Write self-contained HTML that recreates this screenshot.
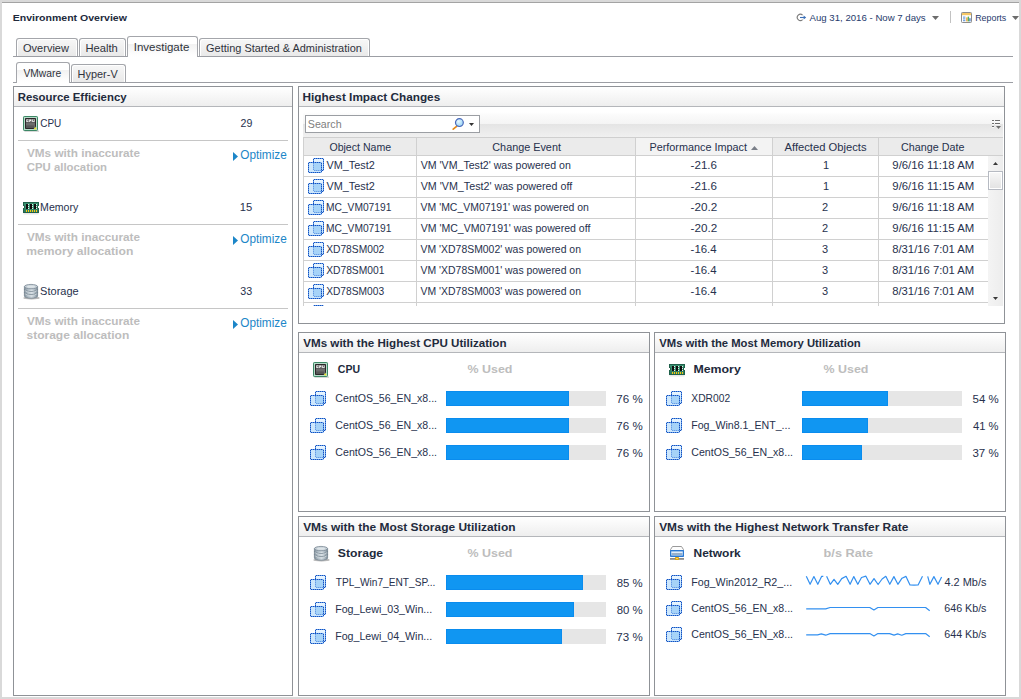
<!DOCTYPE html>
<html><head><meta charset="utf-8"><title>Environment Overview</title>
<style>
html,body{margin:0;padding:0;overflow:hidden}
body{width:1021px;height:699px;overflow:hidden;background:#d9d9d9;position:relative;font-family:"Liberation Sans",sans-serif;font-size:11px;color:#27314d}
.t{position:absolute;white-space:pre;line-height:16px;transform-origin:0 0}
div,svg{box-sizing:border-box}
</style></head><body>
<div style="position:absolute;left:2px;top:2px;width:1017px;height:695px;background:#fff;border-top:1px solid #a3a3a3"></div>
<div style="position:absolute;left:950px;top:11px;width:1px;height:12px;background:#c2c2c2"></div>
<svg style="position:absolute;left:796px;top:13px" width="12" height="9" viewBox="0 0 12 9"><path d="M6.6 2.2 A3.1 3.1 0 1 0 6.6 6.6" fill="none" stroke="#7c7c7c" stroke-width="1.1"/><path d="M4 4.5 H9" stroke="#3c70b8" stroke-width="1.1"/><path d="M7.6 2.6 L10.2 4.5 L7.6 6.4 Z" fill="#3c70b8"/></svg>
<svg style="position:absolute;left:932px;top:16px" width="7" height="4" viewBox="0 0 7 4"><path d="M0 0 H7 L3.5 4 Z" fill="#6c6c6c"/></svg>
<svg style="position:absolute;left:1012px;top:16px" width="7" height="4" viewBox="0 0 7 4"><path d="M0 0 H7 L3.5 4 Z" fill="#6c6c6c"/></svg>
<svg style="position:absolute;left:961px;top:12px" width="11" height="11" viewBox="0 0 11 11"><rect x="0.5" y="0.5" width="10" height="10" rx="0.8" fill="#fff" stroke="#8c8c8c"/><rect x="1" y="1" width="9" height="2.2" fill="#f6c766"/><rect x="2" y="4.6" width="2.4" height="1" fill="#5a8fd8"/><rect x="2" y="6.4" width="2.4" height="1" fill="#5a8fd8"/><rect x="2" y="8.2" width="2.4" height="1" fill="#5a8fd8"/><rect x="5.2" y="5.4" width="1.4" height="4" fill="#f0a030"/><rect x="6.7" y="4.6" width="1.4" height="4.8" fill="#58b058"/><rect x="8.2" y="6.2" width="1.4" height="3.2" fill="#4a80d0"/></svg>
<div style="position:absolute;left:13px;top:56px;width:1000px;height:1px;background:#9c9ea4"></div>
<div style="position:absolute;left:13px;top:82px;width:1000px;height:1px;background:#9c9ea4"></div>
<div style="position:absolute;left:16px;top:38px;width:62px;height:18px;border:1px solid #a4a6ab;border-bottom:none;border-radius:3px 3px 0 0;background:linear-gradient(#f7f7f7,#e9e9e9);box-shadow:inset 1px 1px 0 #fff,inset -1px 0 0 #fff"></div>
<div style="position:absolute;left:79px;top:38px;width:47px;height:18px;border:1px solid #a4a6ab;border-bottom:none;border-radius:3px 3px 0 0;background:linear-gradient(#f7f7f7,#e9e9e9);box-shadow:inset 1px 1px 0 #fff,inset -1px 0 0 #fff"></div>
<div style="position:absolute;left:127px;top:36px;width:71px;height:21px;border:1px solid #a4a6ab;border-bottom:none;border-radius:3px 3px 0 0;background:linear-gradient(#fff 0%,#fff 36%,#f2f2f2 37%,#fdfdfd 85%,#fff 100%)"></div>
<div style="position:absolute;left:199px;top:38px;width:171px;height:18px;border:1px solid #a4a6ab;border-bottom:none;border-radius:3px 3px 0 0;background:linear-gradient(#f7f7f7,#e9e9e9);box-shadow:inset 1px 1px 0 #fff,inset -1px 0 0 #fff"></div>
<div style="position:absolute;left:16px;top:62px;width:54px;height:21px;border:1px solid #a4a6ab;border-bottom:none;border-radius:3px 3px 0 0;background:linear-gradient(#fff 0%,#fff 36%,#f2f2f2 37%,#fdfdfd 85%,#fff 100%)"></div>
<div style="position:absolute;left:71px;top:64px;width:55px;height:18px;border:1px solid #a4a6ab;border-bottom:none;border-radius:3px 3px 0 0;background:linear-gradient(#f7f7f7,#e9e9e9);box-shadow:inset 1px 1px 0 #fff,inset -1px 0 0 #fff"></div>
<div style="position:absolute;left:13px;top:86px;width:280px;height:610px;border:1px solid #8f9297;background:#fff"></div>
<div style="position:absolute;left:14px;top:87px;width:278px;height:19px;background:linear-gradient(#fff,#eee)"></div>
<div style="position:absolute;left:14px;top:106px;width:278px;height:1px;background:#b4b6ba"></div>
<div style="position:absolute;left:298px;top:86px;width:707px;height:238px;border:1px solid #8f9297;background:#fff"></div>
<div style="position:absolute;left:299px;top:87px;width:705px;height:19px;background:linear-gradient(#fff,#eee)"></div>
<div style="position:absolute;left:299px;top:106px;width:705px;height:1px;background:#b4b6ba"></div>
<div style="position:absolute;left:298px;top:332px;width:352px;height:180px;border:1px solid #8f9297;background:#fff"></div>
<div style="position:absolute;left:299px;top:333px;width:350px;height:19px;background:linear-gradient(#fff,#eee)"></div>
<div style="position:absolute;left:299px;top:352px;width:350px;height:1px;background:#b4b6ba"></div>
<div style="position:absolute;left:654px;top:332px;width:352px;height:180px;border:1px solid #8f9297;background:#fff"></div>
<div style="position:absolute;left:655px;top:333px;width:350px;height:19px;background:linear-gradient(#fff,#eee)"></div>
<div style="position:absolute;left:655px;top:352px;width:350px;height:1px;background:#b4b6ba"></div>
<div style="position:absolute;left:298px;top:516px;width:352px;height:180px;border:1px solid #8f9297;background:#fff"></div>
<div style="position:absolute;left:299px;top:517px;width:350px;height:19px;background:linear-gradient(#fff,#eee)"></div>
<div style="position:absolute;left:299px;top:536px;width:350px;height:1px;background:#b4b6ba"></div>
<div style="position:absolute;left:654px;top:516px;width:352px;height:180px;border:1px solid #8f9297;background:#fff"></div>
<div style="position:absolute;left:655px;top:517px;width:350px;height:19px;background:linear-gradient(#fff,#eee)"></div>
<div style="position:absolute;left:655px;top:536px;width:350px;height:1px;background:#b4b6ba"></div>
<svg width="0" height="0" style="position:absolute"><defs><linearGradient id="vb" x1="0" y1="0" x2="0" y2="1"><stop offset="0" stop-color="#eaf6ff"/><stop offset="1" stop-color="#c0e0fa"/></linearGradient></defs></svg>
<div style="position:absolute;left:18px;top:140px;width:270px;height:1px;background:#c6c6c6"></div>
<svg style="position:absolute;left:233px;top:152px;overflow:visible" width="5" height="9" viewBox="0 0 5 9" ><path d="M0 0 L5 4.5 L0 9 Z" fill="#1c86c8"/></svg>
<div style="position:absolute;left:18px;top:224px;width:270px;height:1px;background:#c6c6c6"></div>
<svg style="position:absolute;left:233px;top:236px;overflow:visible" width="5" height="9" viewBox="0 0 5 9" ><path d="M0 0 L5 4.5 L0 9 Z" fill="#1c86c8"/></svg>
<div style="position:absolute;left:18px;top:308px;width:270px;height:1px;background:#c6c6c6"></div>
<svg style="position:absolute;left:233px;top:320px;overflow:visible" width="5" height="9" viewBox="0 0 5 9" ><path d="M0 0 L5 4.5 L0 9 Z" fill="#1c86c8"/></svg>
<svg style="position:absolute;left:23px;top:116px;overflow:visible" width="16" height="16" viewBox="0 0 16 16" ><rect x="1.5" y="14.6" width="14.5" height="1" fill="#8a8a8a" opacity="0.55"/><rect x="0.5" y="0.5" width="14" height="14" rx="0.8" fill="#86c0a6" stroke="#3c8765"/><rect x="1.5" y="1.5" width="12" height="12" fill="none" stroke="#b6dcc9"/><path d="M2.5 2.5 H12.5 V10.7 L10.7 12.5 H2.5 Z" fill="#5c5c5c" stroke="#2c2629"/><rect x="3" y="7" width="9" height="5" fill="#6c6c6c"/><rect x="3" y="9.4" width="8" height="2.6" fill="#565656"/><rect x="3.3" y="3.4" width="2.2" height="2.6" fill="#f0f0f0"/><rect x="4.3" y="4.2" width="1.2" height="1" fill="#4a4a4a"/><rect x="6.2" y="3.4" width="2.2" height="2.6" fill="#f0f0f0"/><rect x="7.2" y="5.1" width="1.2" height="0.9" fill="#4a4a4a"/><rect x="9.2" y="3.4" width="2.4" height="2.6" fill="#f0f0f0"/><rect x="10" y="3.4" width="0.8" height="1.8" fill="#4a4a4a"/><circle cx="12.3" cy="12.4" r="1" fill="#f2e31e"/></svg>
<svg style="position:absolute;left:23px;top:202px;overflow:visible" width="16" height="13" viewBox="0 0 16 13" ><rect x="0.5" y="11.2" width="15" height="1.2" fill="#bdbdbd" opacity="0.45"/><path d="M0 0 H16 V4 H15 V6 H16 V11 H0 V6 H1 V4 H0 Z" fill="#1f604a"/><path d="M1 1 H15 V3.4 H14 V6.6 H15 V10 H1 V6.6 H2 V3.4 H1 Z" fill="#3a9070"/><rect x="1" y="7" width="14" height="3" fill="#2d7c60"/><rect x="3" y="2" width="2" height="5" fill="#100c0e"/><rect x="7" y="2" width="2" height="5" fill="#100c0e"/><rect x="11" y="2" width="2" height="5" fill="#100c0e"/><rect x="5" y="2" width="1" height="1" fill="#e4f2ec"/><rect x="5" y="4" width="1" height="1" fill="#e4f2ec"/><rect x="5" y="6" width="1" height="1" fill="#e4f2ec"/><rect x="9" y="2" width="1" height="1" fill="#e4f2ec"/><rect x="9" y="4" width="1" height="1" fill="#e4f2ec"/><rect x="9" y="6" width="1" height="1" fill="#e4f2ec"/><rect x="13" y="2" width="1" height="1" fill="#e4f2ec"/><rect x="13" y="4" width="1" height="1" fill="#e4f2ec"/><rect x="13" y="6" width="1" height="1" fill="#e4f2ec"/><rect x="3" y="8" width="1" height="2" fill="#f7c80e"/><rect x="5" y="8" width="1" height="2" fill="#f7c80e"/><rect x="7" y="8" width="1" height="2" fill="#f7c80e"/><rect x="9" y="8" width="1" height="2" fill="#f7c80e"/><rect x="11" y="8" width="1" height="2" fill="#f7c80e"/><rect x="13" y="8" width="1" height="2" fill="#f7c80e"/></svg>
<svg style="position:absolute;left:24px;top:284px;overflow:visible" width="16" height="16" viewBox="0 0 16 16" ><defs><linearGradient id="sg24284" x1="0" x2="1"><stop offset="0" stop-color="#7d8c98"/><stop offset="0.22" stop-color="#aab7c0"/><stop offset="0.55" stop-color="#d6dee3"/><stop offset="0.8" stop-color="#a9b6bf"/><stop offset="1" stop-color="#788793"/></linearGradient></defs><ellipse cx="7.5" cy="13.9" rx="8.2" ry="1.7" fill="#7e7e7e" opacity="0.55"/><path d="M0.4 2.6 V12 A6.6 2.2 0 0 0 13.6 12 V2.6 Z" fill="url(#sg24284)" stroke="#74838f" stroke-width="0.8"/><ellipse cx="7" cy="2.6" rx="6.6" ry="2.2" fill="#c4ced5" stroke="#7b8995" stroke-width="0.8"/><ellipse cx="7" cy="2.7" rx="4" ry="1.1" fill="#dde4e8"/><path d="M0.4 5.4 A6.6 2.2 0 0 0 13.6 5.4 M0.4 8.5 A6.6 2.2 0 0 0 13.6 8.5" fill="none" stroke="#6c7c89" stroke-width="1"/><path d="M0.9 6.5 A6.3 2.2 0 0 0 13.1 6.5 M0.9 9.6 A6.3 2.2 0 0 0 13.1 9.6" fill="none" stroke="#e6ecef" stroke-width="0.8" opacity="0.85"/></svg>
<div style="position:absolute;left:303px;top:112px;width:700px;height:25px;background:linear-gradient(#fff 0%,#fbfbfb 12%,#f4f4f4 47.9%,#e4e4e4 48%,#f0f0f0 100%)"></div>
<div style="position:absolute;left:305px;top:115px;width:175px;height:18px;background:#fff;border:1px solid #9b9ea3"></div>
<svg style="position:absolute;left:452px;top:118px;overflow:visible" width="12" height="12" viewBox="0 0 12 12" ><defs><radialGradient id="mg" cx="0.4" cy="0.35"><stop offset="0" stop-color="#e9f8ff"/><stop offset="1" stop-color="#a9dcf8"/></radialGradient></defs><path d="M4.6 8.4 L1.2 11.2" stroke="#e58a18" stroke-width="1.7" stroke-linecap="round"/><circle cx="7.4" cy="4.6" r="3.9" fill="url(#mg)" stroke="#4968ba" stroke-width="1.2"/></svg>
<svg style="position:absolute;left:469px;top:123px;overflow:visible" width="5" height="3" viewBox="0 0 5 3" ><path d="M0 0 H5 L2.5 3 Z" fill="#333"/></svg>
<svg style="position:absolute;left:992px;top:120px;overflow:visible" width="9" height="9" viewBox="0 0 9 9" ><g fill="#fff" opacity="0.8"><rect x="0" y="1" width="2" height="1"/><rect x="3" y="1" width="5" height="1"/><rect x="0" y="4" width="2" height="1"/><rect x="3" y="4" width="5" height="1"/><rect x="0" y="7" width="2" height="1"/></g><g fill="#6e6e6e"><rect x="0" y="0" width="2" height="1"/><rect x="3" y="0" width="5" height="1"/><rect x="0" y="3" width="2" height="1"/><rect x="3" y="3" width="5" height="1"/><rect x="0" y="6" width="2" height="1"/><path d="M4 6 H9 L6.5 9 Z"/></g></svg>
<div style="position:absolute;left:303px;top:137px;width:700px;height:1px;background:#cfcfcf"></div>
<div style="position:absolute;left:303px;top:138px;width:700px;height:18px;background:#ebebeb"></div>
<div style="position:absolute;left:636px;top:138px;width:136px;height:18px;background:#f3f3f3"></div>
<div style="position:absolute;left:303px;top:155px;width:700px;height:1px;background:#d0d0d0"></div>
<div style="position:absolute;left:416px;top:138px;width:1px;height:168px;background:#d0d0d0"></div>
<div style="position:absolute;left:635px;top:138px;width:1px;height:168px;background:#d0d0d0"></div>
<div style="position:absolute;left:772px;top:138px;width:1px;height:168px;background:#d0d0d0"></div>
<div style="position:absolute;left:878px;top:138px;width:1px;height:168px;background:#d0d0d0"></div>
<div style="position:absolute;left:303px;top:138px;width:1px;height:168px;background:#d0d0d0"></div>
<svg style="position:absolute;left:751px;top:146px;overflow:visible" width="7" height="4" viewBox="0 0 7 4" ><path d="M0 4 L3.5 0 L7 4 Z" fill="#7a7f88"/></svg>
<div style="position:absolute;left:303px;top:176px;width:685px;height:1px;background:#d0d0d0"></div>
<svg style="position:absolute;left:308px;top:158px;overflow:visible" width="16" height="15" viewBox="0 0 16 15" ><rect x="6" y="1" width="9" height="11" fill="url(#vb)"/><path d="M6 .5H15M15.5 1V12M6 12.5H15M5.5 1V12" stroke="#5d99ea" fill="none"/><path d="M6 .5H15M15.5 1V12M6 12.5H15M5.5 1V12" stroke="#1752bd" stroke-dasharray="1 1" fill="none"/><path d="M5 0h1v1h-1zM15 0h1v1h-1zM15 12h1v1h-1z" fill="#5d99ea" opacity="0.45"/><rect x="1" y="5" width="12" height="9" fill="#cde7fc"/><rect x="6" y="5" width="7" height="7" fill="#a6d3f8"/><path d="M5.5 5V12M6 12.5H13" stroke="#8fbdf0" fill="none"/><path d="M5.5 5V12M6 12.5H13" stroke="#5a94e4" stroke-dasharray="1 1" fill="none" opacity="0.8"/><path d="M1 4.5H13M.5 5V14M13.5 5V14M1 14.5H13" stroke="#5d99ea" fill="none"/><path d="M1 4.5H13M.5 5V14M13.5 5V14M1 14.5H13" stroke="#1752bd" stroke-dasharray="1 1" fill="none"/><path d="M0 4h1v1h-1zM13 4h1v1h-1zM0 14h1v1h-1zM13 14h1v1h-1z" fill="#5d99ea" opacity="0.5"/></svg>
<div style="position:absolute;left:303px;top:197px;width:685px;height:1px;background:#d0d0d0"></div>
<svg style="position:absolute;left:308px;top:179px;overflow:visible" width="16" height="15" viewBox="0 0 16 15" ><rect x="6" y="1" width="9" height="11" fill="url(#vb)"/><path d="M6 .5H15M15.5 1V12M6 12.5H15M5.5 1V12" stroke="#5d99ea" fill="none"/><path d="M6 .5H15M15.5 1V12M6 12.5H15M5.5 1V12" stroke="#1752bd" stroke-dasharray="1 1" fill="none"/><path d="M5 0h1v1h-1zM15 0h1v1h-1zM15 12h1v1h-1z" fill="#5d99ea" opacity="0.45"/><rect x="1" y="5" width="12" height="9" fill="#cde7fc"/><rect x="6" y="5" width="7" height="7" fill="#a6d3f8"/><path d="M5.5 5V12M6 12.5H13" stroke="#8fbdf0" fill="none"/><path d="M5.5 5V12M6 12.5H13" stroke="#5a94e4" stroke-dasharray="1 1" fill="none" opacity="0.8"/><path d="M1 4.5H13M.5 5V14M13.5 5V14M1 14.5H13" stroke="#5d99ea" fill="none"/><path d="M1 4.5H13M.5 5V14M13.5 5V14M1 14.5H13" stroke="#1752bd" stroke-dasharray="1 1" fill="none"/><path d="M0 4h1v1h-1zM13 4h1v1h-1zM0 14h1v1h-1zM13 14h1v1h-1z" fill="#5d99ea" opacity="0.5"/></svg>
<div style="position:absolute;left:303px;top:218px;width:685px;height:1px;background:#d0d0d0"></div>
<svg style="position:absolute;left:308px;top:200px;overflow:visible" width="16" height="15" viewBox="0 0 16 15" ><rect x="6" y="1" width="9" height="11" fill="url(#vb)"/><path d="M6 .5H15M15.5 1V12M6 12.5H15M5.5 1V12" stroke="#5d99ea" fill="none"/><path d="M6 .5H15M15.5 1V12M6 12.5H15M5.5 1V12" stroke="#1752bd" stroke-dasharray="1 1" fill="none"/><path d="M5 0h1v1h-1zM15 0h1v1h-1zM15 12h1v1h-1z" fill="#5d99ea" opacity="0.45"/><rect x="1" y="5" width="12" height="9" fill="#cde7fc"/><rect x="6" y="5" width="7" height="7" fill="#a6d3f8"/><path d="M5.5 5V12M6 12.5H13" stroke="#8fbdf0" fill="none"/><path d="M5.5 5V12M6 12.5H13" stroke="#5a94e4" stroke-dasharray="1 1" fill="none" opacity="0.8"/><path d="M1 4.5H13M.5 5V14M13.5 5V14M1 14.5H13" stroke="#5d99ea" fill="none"/><path d="M1 4.5H13M.5 5V14M13.5 5V14M1 14.5H13" stroke="#1752bd" stroke-dasharray="1 1" fill="none"/><path d="M0 4h1v1h-1zM13 4h1v1h-1zM0 14h1v1h-1zM13 14h1v1h-1z" fill="#5d99ea" opacity="0.5"/></svg>
<div style="position:absolute;left:303px;top:239px;width:685px;height:1px;background:#d0d0d0"></div>
<svg style="position:absolute;left:308px;top:221px;overflow:visible" width="16" height="15" viewBox="0 0 16 15" ><rect x="6" y="1" width="9" height="11" fill="url(#vb)"/><path d="M6 .5H15M15.5 1V12M6 12.5H15M5.5 1V12" stroke="#5d99ea" fill="none"/><path d="M6 .5H15M15.5 1V12M6 12.5H15M5.5 1V12" stroke="#1752bd" stroke-dasharray="1 1" fill="none"/><path d="M5 0h1v1h-1zM15 0h1v1h-1zM15 12h1v1h-1z" fill="#5d99ea" opacity="0.45"/><rect x="1" y="5" width="12" height="9" fill="#cde7fc"/><rect x="6" y="5" width="7" height="7" fill="#a6d3f8"/><path d="M5.5 5V12M6 12.5H13" stroke="#8fbdf0" fill="none"/><path d="M5.5 5V12M6 12.5H13" stroke="#5a94e4" stroke-dasharray="1 1" fill="none" opacity="0.8"/><path d="M1 4.5H13M.5 5V14M13.5 5V14M1 14.5H13" stroke="#5d99ea" fill="none"/><path d="M1 4.5H13M.5 5V14M13.5 5V14M1 14.5H13" stroke="#1752bd" stroke-dasharray="1 1" fill="none"/><path d="M0 4h1v1h-1zM13 4h1v1h-1zM0 14h1v1h-1zM13 14h1v1h-1z" fill="#5d99ea" opacity="0.5"/></svg>
<div style="position:absolute;left:303px;top:260px;width:685px;height:1px;background:#d0d0d0"></div>
<svg style="position:absolute;left:308px;top:242px;overflow:visible" width="16" height="15" viewBox="0 0 16 15" ><rect x="6" y="1" width="9" height="11" fill="url(#vb)"/><path d="M6 .5H15M15.5 1V12M6 12.5H15M5.5 1V12" stroke="#5d99ea" fill="none"/><path d="M6 .5H15M15.5 1V12M6 12.5H15M5.5 1V12" stroke="#1752bd" stroke-dasharray="1 1" fill="none"/><path d="M5 0h1v1h-1zM15 0h1v1h-1zM15 12h1v1h-1z" fill="#5d99ea" opacity="0.45"/><rect x="1" y="5" width="12" height="9" fill="#cde7fc"/><rect x="6" y="5" width="7" height="7" fill="#a6d3f8"/><path d="M5.5 5V12M6 12.5H13" stroke="#8fbdf0" fill="none"/><path d="M5.5 5V12M6 12.5H13" stroke="#5a94e4" stroke-dasharray="1 1" fill="none" opacity="0.8"/><path d="M1 4.5H13M.5 5V14M13.5 5V14M1 14.5H13" stroke="#5d99ea" fill="none"/><path d="M1 4.5H13M.5 5V14M13.5 5V14M1 14.5H13" stroke="#1752bd" stroke-dasharray="1 1" fill="none"/><path d="M0 4h1v1h-1zM13 4h1v1h-1zM0 14h1v1h-1zM13 14h1v1h-1z" fill="#5d99ea" opacity="0.5"/></svg>
<div style="position:absolute;left:303px;top:281px;width:685px;height:1px;background:#d0d0d0"></div>
<svg style="position:absolute;left:308px;top:263px;overflow:visible" width="16" height="15" viewBox="0 0 16 15" ><rect x="6" y="1" width="9" height="11" fill="url(#vb)"/><path d="M6 .5H15M15.5 1V12M6 12.5H15M5.5 1V12" stroke="#5d99ea" fill="none"/><path d="M6 .5H15M15.5 1V12M6 12.5H15M5.5 1V12" stroke="#1752bd" stroke-dasharray="1 1" fill="none"/><path d="M5 0h1v1h-1zM15 0h1v1h-1zM15 12h1v1h-1z" fill="#5d99ea" opacity="0.45"/><rect x="1" y="5" width="12" height="9" fill="#cde7fc"/><rect x="6" y="5" width="7" height="7" fill="#a6d3f8"/><path d="M5.5 5V12M6 12.5H13" stroke="#8fbdf0" fill="none"/><path d="M5.5 5V12M6 12.5H13" stroke="#5a94e4" stroke-dasharray="1 1" fill="none" opacity="0.8"/><path d="M1 4.5H13M.5 5V14M13.5 5V14M1 14.5H13" stroke="#5d99ea" fill="none"/><path d="M1 4.5H13M.5 5V14M13.5 5V14M1 14.5H13" stroke="#1752bd" stroke-dasharray="1 1" fill="none"/><path d="M0 4h1v1h-1zM13 4h1v1h-1zM0 14h1v1h-1zM13 14h1v1h-1z" fill="#5d99ea" opacity="0.5"/></svg>
<div style="position:absolute;left:303px;top:302px;width:685px;height:1px;background:#d0d0d0"></div>
<svg style="position:absolute;left:308px;top:284px;overflow:visible" width="16" height="15" viewBox="0 0 16 15" ><rect x="6" y="1" width="9" height="11" fill="url(#vb)"/><path d="M6 .5H15M15.5 1V12M6 12.5H15M5.5 1V12" stroke="#5d99ea" fill="none"/><path d="M6 .5H15M15.5 1V12M6 12.5H15M5.5 1V12" stroke="#1752bd" stroke-dasharray="1 1" fill="none"/><path d="M5 0h1v1h-1zM15 0h1v1h-1zM15 12h1v1h-1z" fill="#5d99ea" opacity="0.45"/><rect x="1" y="5" width="12" height="9" fill="#cde7fc"/><rect x="6" y="5" width="7" height="7" fill="#a6d3f8"/><path d="M5.5 5V12M6 12.5H13" stroke="#8fbdf0" fill="none"/><path d="M5.5 5V12M6 12.5H13" stroke="#5a94e4" stroke-dasharray="1 1" fill="none" opacity="0.8"/><path d="M1 4.5H13M.5 5V14M13.5 5V14M1 14.5H13" stroke="#5d99ea" fill="none"/><path d="M1 4.5H13M.5 5V14M13.5 5V14M1 14.5H13" stroke="#1752bd" stroke-dasharray="1 1" fill="none"/><path d="M0 4h1v1h-1zM13 4h1v1h-1zM0 14h1v1h-1zM13 14h1v1h-1z" fill="#5d99ea" opacity="0.5"/></svg>
<div style="position:absolute;left:308px;top:303px;width:16px;height:3px;overflow:hidden"><svg style="position:absolute;left:0;top:2px" width="16" height="15" viewBox="0 0 16 15"><rect x="6" y="1" width="9" height="11" fill="url(#vb)"/><path d="M6 .5H15M15.5 1V12M6 12.5H15M5.5 1V12" stroke="#5d99ea" fill="none"/><path d="M6 .5H15M15.5 1V12M6 12.5H15M5.5 1V12" stroke="#1752bd" stroke-dasharray="1 1" fill="none"/><path d="M5 0h1v1h-1zM15 0h1v1h-1zM15 12h1v1h-1z" fill="#5d99ea" opacity="0.45"/><rect x="1" y="5" width="12" height="9" fill="#cde7fc"/><rect x="6" y="5" width="7" height="7" fill="#a6d3f8"/><path d="M5.5 5V12M6 12.5H13" stroke="#8fbdf0" fill="none"/><path d="M5.5 5V12M6 12.5H13" stroke="#5a94e4" stroke-dasharray="1 1" fill="none" opacity="0.8"/><path d="M1 4.5H13M.5 5V14M13.5 5V14M1 14.5H13" stroke="#5d99ea" fill="none"/><path d="M1 4.5H13M.5 5V14M13.5 5V14M1 14.5H13" stroke="#1752bd" stroke-dasharray="1 1" fill="none"/><path d="M0 4h1v1h-1zM13 4h1v1h-1zM0 14h1v1h-1zM13 14h1v1h-1z" fill="#5d99ea" opacity="0.5"/></svg></div>
<div style="position:absolute;left:988px;top:156px;width:15px;height:150px;background:linear-gradient(90deg,#f4f4f4,#ededed)"></div>
<svg style="position:absolute;left:993px;top:162px;overflow:visible" width="5" height="3" viewBox="0 0 5 3" ><path d="M0 3 L2.5 0 L5 3 Z" fill="#383838"/></svg>
<svg style="position:absolute;left:993px;top:297px;overflow:visible" width="5" height="3" viewBox="0 0 5 3" ><path d="M0 0 H5 L2.5 3 Z" fill="#383838"/></svg>
<div style="position:absolute;left:988px;top:171px;width:15px;height:19px;background:linear-gradient(#f8f8f8,#e2e2e2);border:1px solid #b6bac2;box-shadow:inset 0 0 0 1px #fff"></div>
<svg style="position:absolute;left:313px;top:362px;overflow:visible" width="16" height="16" viewBox="0 0 16 16" ><rect x="1.5" y="14.6" width="14.5" height="1" fill="#8a8a8a" opacity="0.55"/><rect x="0.5" y="0.5" width="14" height="14" rx="0.8" fill="#86c0a6" stroke="#3c8765"/><rect x="1.5" y="1.5" width="12" height="12" fill="none" stroke="#b6dcc9"/><path d="M2.5 2.5 H12.5 V10.7 L10.7 12.5 H2.5 Z" fill="#5c5c5c" stroke="#2c2629"/><rect x="3" y="7" width="9" height="5" fill="#6c6c6c"/><rect x="3" y="9.4" width="8" height="2.6" fill="#565656"/><rect x="3.3" y="3.4" width="2.2" height="2.6" fill="#f0f0f0"/><rect x="4.3" y="4.2" width="1.2" height="1" fill="#4a4a4a"/><rect x="6.2" y="3.4" width="2.2" height="2.6" fill="#f0f0f0"/><rect x="7.2" y="5.1" width="1.2" height="0.9" fill="#4a4a4a"/><rect x="9.2" y="3.4" width="2.4" height="2.6" fill="#f0f0f0"/><rect x="10" y="3.4" width="0.8" height="1.8" fill="#4a4a4a"/><circle cx="12.3" cy="12.4" r="1" fill="#f2e31e"/></svg>
<svg style="position:absolute;left:310px;top:391px;overflow:visible" width="16" height="15" viewBox="0 0 16 15" ><rect x="6" y="1" width="9" height="11" fill="url(#vb)"/><path d="M6 .5H15M15.5 1V12M6 12.5H15M5.5 1V12" stroke="#5d99ea" fill="none"/><path d="M6 .5H15M15.5 1V12M6 12.5H15M5.5 1V12" stroke="#1752bd" stroke-dasharray="1 1" fill="none"/><path d="M5 0h1v1h-1zM15 0h1v1h-1zM15 12h1v1h-1z" fill="#5d99ea" opacity="0.45"/><rect x="1" y="5" width="12" height="9" fill="#cde7fc"/><rect x="6" y="5" width="7" height="7" fill="#a6d3f8"/><path d="M5.5 5V12M6 12.5H13" stroke="#8fbdf0" fill="none"/><path d="M5.5 5V12M6 12.5H13" stroke="#5a94e4" stroke-dasharray="1 1" fill="none" opacity="0.8"/><path d="M1 4.5H13M.5 5V14M13.5 5V14M1 14.5H13" stroke="#5d99ea" fill="none"/><path d="M1 4.5H13M.5 5V14M13.5 5V14M1 14.5H13" stroke="#1752bd" stroke-dasharray="1 1" fill="none"/><path d="M0 4h1v1h-1zM13 4h1v1h-1zM0 14h1v1h-1zM13 14h1v1h-1z" fill="#5d99ea" opacity="0.5"/></svg>
<div style="position:absolute;left:446px;top:391px;width:160px;height:15px;background:#e6e6e6"></div>
<div style="position:absolute;left:446px;top:391px;width:123px;height:15px;background:#1096f2;border:1px solid #0a8cee"></div>
<svg style="position:absolute;left:310px;top:418px;overflow:visible" width="16" height="15" viewBox="0 0 16 15" ><rect x="6" y="1" width="9" height="11" fill="url(#vb)"/><path d="M6 .5H15M15.5 1V12M6 12.5H15M5.5 1V12" stroke="#5d99ea" fill="none"/><path d="M6 .5H15M15.5 1V12M6 12.5H15M5.5 1V12" stroke="#1752bd" stroke-dasharray="1 1" fill="none"/><path d="M5 0h1v1h-1zM15 0h1v1h-1zM15 12h1v1h-1z" fill="#5d99ea" opacity="0.45"/><rect x="1" y="5" width="12" height="9" fill="#cde7fc"/><rect x="6" y="5" width="7" height="7" fill="#a6d3f8"/><path d="M5.5 5V12M6 12.5H13" stroke="#8fbdf0" fill="none"/><path d="M5.5 5V12M6 12.5H13" stroke="#5a94e4" stroke-dasharray="1 1" fill="none" opacity="0.8"/><path d="M1 4.5H13M.5 5V14M13.5 5V14M1 14.5H13" stroke="#5d99ea" fill="none"/><path d="M1 4.5H13M.5 5V14M13.5 5V14M1 14.5H13" stroke="#1752bd" stroke-dasharray="1 1" fill="none"/><path d="M0 4h1v1h-1zM13 4h1v1h-1zM0 14h1v1h-1zM13 14h1v1h-1z" fill="#5d99ea" opacity="0.5"/></svg>
<div style="position:absolute;left:446px;top:418px;width:160px;height:15px;background:#e6e6e6"></div>
<div style="position:absolute;left:446px;top:418px;width:123px;height:15px;background:#1096f2;border:1px solid #0a8cee"></div>
<svg style="position:absolute;left:310px;top:445px;overflow:visible" width="16" height="15" viewBox="0 0 16 15" ><rect x="6" y="1" width="9" height="11" fill="url(#vb)"/><path d="M6 .5H15M15.5 1V12M6 12.5H15M5.5 1V12" stroke="#5d99ea" fill="none"/><path d="M6 .5H15M15.5 1V12M6 12.5H15M5.5 1V12" stroke="#1752bd" stroke-dasharray="1 1" fill="none"/><path d="M5 0h1v1h-1zM15 0h1v1h-1zM15 12h1v1h-1z" fill="#5d99ea" opacity="0.45"/><rect x="1" y="5" width="12" height="9" fill="#cde7fc"/><rect x="6" y="5" width="7" height="7" fill="#a6d3f8"/><path d="M5.5 5V12M6 12.5H13" stroke="#8fbdf0" fill="none"/><path d="M5.5 5V12M6 12.5H13" stroke="#5a94e4" stroke-dasharray="1 1" fill="none" opacity="0.8"/><path d="M1 4.5H13M.5 5V14M13.5 5V14M1 14.5H13" stroke="#5d99ea" fill="none"/><path d="M1 4.5H13M.5 5V14M13.5 5V14M1 14.5H13" stroke="#1752bd" stroke-dasharray="1 1" fill="none"/><path d="M0 4h1v1h-1zM13 4h1v1h-1zM0 14h1v1h-1zM13 14h1v1h-1z" fill="#5d99ea" opacity="0.5"/></svg>
<div style="position:absolute;left:446px;top:445px;width:160px;height:15px;background:#e6e6e6"></div>
<div style="position:absolute;left:446px;top:445px;width:123px;height:15px;background:#1096f2;border:1px solid #0a8cee"></div>
<svg style="position:absolute;left:669px;top:364px;overflow:visible" width="16" height="13" viewBox="0 0 16 13" ><rect x="0.5" y="11.2" width="15" height="1.2" fill="#bdbdbd" opacity="0.45"/><path d="M0 0 H16 V4 H15 V6 H16 V11 H0 V6 H1 V4 H0 Z" fill="#1f604a"/><path d="M1 1 H15 V3.4 H14 V6.6 H15 V10 H1 V6.6 H2 V3.4 H1 Z" fill="#3a9070"/><rect x="1" y="7" width="14" height="3" fill="#2d7c60"/><rect x="3" y="2" width="2" height="5" fill="#100c0e"/><rect x="7" y="2" width="2" height="5" fill="#100c0e"/><rect x="11" y="2" width="2" height="5" fill="#100c0e"/><rect x="5" y="2" width="1" height="1" fill="#e4f2ec"/><rect x="5" y="4" width="1" height="1" fill="#e4f2ec"/><rect x="5" y="6" width="1" height="1" fill="#e4f2ec"/><rect x="9" y="2" width="1" height="1" fill="#e4f2ec"/><rect x="9" y="4" width="1" height="1" fill="#e4f2ec"/><rect x="9" y="6" width="1" height="1" fill="#e4f2ec"/><rect x="13" y="2" width="1" height="1" fill="#e4f2ec"/><rect x="13" y="4" width="1" height="1" fill="#e4f2ec"/><rect x="13" y="6" width="1" height="1" fill="#e4f2ec"/><rect x="3" y="8" width="1" height="2" fill="#f7c80e"/><rect x="5" y="8" width="1" height="2" fill="#f7c80e"/><rect x="7" y="8" width="1" height="2" fill="#f7c80e"/><rect x="9" y="8" width="1" height="2" fill="#f7c80e"/><rect x="11" y="8" width="1" height="2" fill="#f7c80e"/><rect x="13" y="8" width="1" height="2" fill="#f7c80e"/></svg>
<svg style="position:absolute;left:666px;top:391px;overflow:visible" width="16" height="15" viewBox="0 0 16 15" ><rect x="6" y="1" width="9" height="11" fill="url(#vb)"/><path d="M6 .5H15M15.5 1V12M6 12.5H15M5.5 1V12" stroke="#5d99ea" fill="none"/><path d="M6 .5H15M15.5 1V12M6 12.5H15M5.5 1V12" stroke="#1752bd" stroke-dasharray="1 1" fill="none"/><path d="M5 0h1v1h-1zM15 0h1v1h-1zM15 12h1v1h-1z" fill="#5d99ea" opacity="0.45"/><rect x="1" y="5" width="12" height="9" fill="#cde7fc"/><rect x="6" y="5" width="7" height="7" fill="#a6d3f8"/><path d="M5.5 5V12M6 12.5H13" stroke="#8fbdf0" fill="none"/><path d="M5.5 5V12M6 12.5H13" stroke="#5a94e4" stroke-dasharray="1 1" fill="none" opacity="0.8"/><path d="M1 4.5H13M.5 5V14M13.5 5V14M1 14.5H13" stroke="#5d99ea" fill="none"/><path d="M1 4.5H13M.5 5V14M13.5 5V14M1 14.5H13" stroke="#1752bd" stroke-dasharray="1 1" fill="none"/><path d="M0 4h1v1h-1zM13 4h1v1h-1zM0 14h1v1h-1zM13 14h1v1h-1z" fill="#5d99ea" opacity="0.5"/></svg>
<div style="position:absolute;left:802px;top:391px;width:160px;height:15px;background:#e6e6e6"></div>
<div style="position:absolute;left:802px;top:391px;width:86px;height:15px;background:#1096f2;border:1px solid #0a8cee"></div>
<svg style="position:absolute;left:666px;top:418px;overflow:visible" width="16" height="15" viewBox="0 0 16 15" ><rect x="6" y="1" width="9" height="11" fill="url(#vb)"/><path d="M6 .5H15M15.5 1V12M6 12.5H15M5.5 1V12" stroke="#5d99ea" fill="none"/><path d="M6 .5H15M15.5 1V12M6 12.5H15M5.5 1V12" stroke="#1752bd" stroke-dasharray="1 1" fill="none"/><path d="M5 0h1v1h-1zM15 0h1v1h-1zM15 12h1v1h-1z" fill="#5d99ea" opacity="0.45"/><rect x="1" y="5" width="12" height="9" fill="#cde7fc"/><rect x="6" y="5" width="7" height="7" fill="#a6d3f8"/><path d="M5.5 5V12M6 12.5H13" stroke="#8fbdf0" fill="none"/><path d="M5.5 5V12M6 12.5H13" stroke="#5a94e4" stroke-dasharray="1 1" fill="none" opacity="0.8"/><path d="M1 4.5H13M.5 5V14M13.5 5V14M1 14.5H13" stroke="#5d99ea" fill="none"/><path d="M1 4.5H13M.5 5V14M13.5 5V14M1 14.5H13" stroke="#1752bd" stroke-dasharray="1 1" fill="none"/><path d="M0 4h1v1h-1zM13 4h1v1h-1zM0 14h1v1h-1zM13 14h1v1h-1z" fill="#5d99ea" opacity="0.5"/></svg>
<div style="position:absolute;left:802px;top:418px;width:160px;height:15px;background:#e6e6e6"></div>
<div style="position:absolute;left:802px;top:418px;width:66px;height:15px;background:#1096f2;border:1px solid #0a8cee"></div>
<svg style="position:absolute;left:666px;top:445px;overflow:visible" width="16" height="15" viewBox="0 0 16 15" ><rect x="6" y="1" width="9" height="11" fill="url(#vb)"/><path d="M6 .5H15M15.5 1V12M6 12.5H15M5.5 1V12" stroke="#5d99ea" fill="none"/><path d="M6 .5H15M15.5 1V12M6 12.5H15M5.5 1V12" stroke="#1752bd" stroke-dasharray="1 1" fill="none"/><path d="M5 0h1v1h-1zM15 0h1v1h-1zM15 12h1v1h-1z" fill="#5d99ea" opacity="0.45"/><rect x="1" y="5" width="12" height="9" fill="#cde7fc"/><rect x="6" y="5" width="7" height="7" fill="#a6d3f8"/><path d="M5.5 5V12M6 12.5H13" stroke="#8fbdf0" fill="none"/><path d="M5.5 5V12M6 12.5H13" stroke="#5a94e4" stroke-dasharray="1 1" fill="none" opacity="0.8"/><path d="M1 4.5H13M.5 5V14M13.5 5V14M1 14.5H13" stroke="#5d99ea" fill="none"/><path d="M1 4.5H13M.5 5V14M13.5 5V14M1 14.5H13" stroke="#1752bd" stroke-dasharray="1 1" fill="none"/><path d="M0 4h1v1h-1zM13 4h1v1h-1zM0 14h1v1h-1zM13 14h1v1h-1z" fill="#5d99ea" opacity="0.5"/></svg>
<div style="position:absolute;left:802px;top:445px;width:160px;height:15px;background:#e6e6e6"></div>
<div style="position:absolute;left:802px;top:445px;width:60px;height:15px;background:#1096f2;border:1px solid #0a8cee"></div>
<svg style="position:absolute;left:314px;top:546px;overflow:visible" width="16" height="16" viewBox="0 0 16 16" ><defs><linearGradient id="sg314546" x1="0" x2="1"><stop offset="0" stop-color="#7d8c98"/><stop offset="0.22" stop-color="#aab7c0"/><stop offset="0.55" stop-color="#d6dee3"/><stop offset="0.8" stop-color="#a9b6bf"/><stop offset="1" stop-color="#788793"/></linearGradient></defs><ellipse cx="7.5" cy="13.9" rx="8.2" ry="1.7" fill="#7e7e7e" opacity="0.55"/><path d="M0.4 2.6 V12 A6.6 2.2 0 0 0 13.6 12 V2.6 Z" fill="url(#sg314546)" stroke="#74838f" stroke-width="0.8"/><ellipse cx="7" cy="2.6" rx="6.6" ry="2.2" fill="#c4ced5" stroke="#7b8995" stroke-width="0.8"/><ellipse cx="7" cy="2.7" rx="4" ry="1.1" fill="#dde4e8"/><path d="M0.4 5.4 A6.6 2.2 0 0 0 13.6 5.4 M0.4 8.5 A6.6 2.2 0 0 0 13.6 8.5" fill="none" stroke="#6c7c89" stroke-width="1"/><path d="M0.9 6.5 A6.3 2.2 0 0 0 13.1 6.5 M0.9 9.6 A6.3 2.2 0 0 0 13.1 9.6" fill="none" stroke="#e6ecef" stroke-width="0.8" opacity="0.85"/></svg>
<svg style="position:absolute;left:310px;top:575px;overflow:visible" width="16" height="15" viewBox="0 0 16 15" ><rect x="6" y="1" width="9" height="11" fill="url(#vb)"/><path d="M6 .5H15M15.5 1V12M6 12.5H15M5.5 1V12" stroke="#5d99ea" fill="none"/><path d="M6 .5H15M15.5 1V12M6 12.5H15M5.5 1V12" stroke="#1752bd" stroke-dasharray="1 1" fill="none"/><path d="M5 0h1v1h-1zM15 0h1v1h-1zM15 12h1v1h-1z" fill="#5d99ea" opacity="0.45"/><rect x="1" y="5" width="12" height="9" fill="#cde7fc"/><rect x="6" y="5" width="7" height="7" fill="#a6d3f8"/><path d="M5.5 5V12M6 12.5H13" stroke="#8fbdf0" fill="none"/><path d="M5.5 5V12M6 12.5H13" stroke="#5a94e4" stroke-dasharray="1 1" fill="none" opacity="0.8"/><path d="M1 4.5H13M.5 5V14M13.5 5V14M1 14.5H13" stroke="#5d99ea" fill="none"/><path d="M1 4.5H13M.5 5V14M13.5 5V14M1 14.5H13" stroke="#1752bd" stroke-dasharray="1 1" fill="none"/><path d="M0 4h1v1h-1zM13 4h1v1h-1zM0 14h1v1h-1zM13 14h1v1h-1z" fill="#5d99ea" opacity="0.5"/></svg>
<div style="position:absolute;left:446px;top:575px;width:160px;height:15px;background:#e6e6e6"></div>
<div style="position:absolute;left:446px;top:575px;width:137px;height:15px;background:#1096f2;border:1px solid #0a8cee"></div>
<svg style="position:absolute;left:310px;top:602px;overflow:visible" width="16" height="15" viewBox="0 0 16 15" ><rect x="6" y="1" width="9" height="11" fill="url(#vb)"/><path d="M6 .5H15M15.5 1V12M6 12.5H15M5.5 1V12" stroke="#5d99ea" fill="none"/><path d="M6 .5H15M15.5 1V12M6 12.5H15M5.5 1V12" stroke="#1752bd" stroke-dasharray="1 1" fill="none"/><path d="M5 0h1v1h-1zM15 0h1v1h-1zM15 12h1v1h-1z" fill="#5d99ea" opacity="0.45"/><rect x="1" y="5" width="12" height="9" fill="#cde7fc"/><rect x="6" y="5" width="7" height="7" fill="#a6d3f8"/><path d="M5.5 5V12M6 12.5H13" stroke="#8fbdf0" fill="none"/><path d="M5.5 5V12M6 12.5H13" stroke="#5a94e4" stroke-dasharray="1 1" fill="none" opacity="0.8"/><path d="M1 4.5H13M.5 5V14M13.5 5V14M1 14.5H13" stroke="#5d99ea" fill="none"/><path d="M1 4.5H13M.5 5V14M13.5 5V14M1 14.5H13" stroke="#1752bd" stroke-dasharray="1 1" fill="none"/><path d="M0 4h1v1h-1zM13 4h1v1h-1zM0 14h1v1h-1zM13 14h1v1h-1z" fill="#5d99ea" opacity="0.5"/></svg>
<div style="position:absolute;left:446px;top:602px;width:160px;height:15px;background:#e6e6e6"></div>
<div style="position:absolute;left:446px;top:602px;width:128px;height:15px;background:#1096f2;border:1px solid #0a8cee"></div>
<svg style="position:absolute;left:310px;top:629px;overflow:visible" width="16" height="15" viewBox="0 0 16 15" ><rect x="6" y="1" width="9" height="11" fill="url(#vb)"/><path d="M6 .5H15M15.5 1V12M6 12.5H15M5.5 1V12" stroke="#5d99ea" fill="none"/><path d="M6 .5H15M15.5 1V12M6 12.5H15M5.5 1V12" stroke="#1752bd" stroke-dasharray="1 1" fill="none"/><path d="M5 0h1v1h-1zM15 0h1v1h-1zM15 12h1v1h-1z" fill="#5d99ea" opacity="0.45"/><rect x="1" y="5" width="12" height="9" fill="#cde7fc"/><rect x="6" y="5" width="7" height="7" fill="#a6d3f8"/><path d="M5.5 5V12M6 12.5H13" stroke="#8fbdf0" fill="none"/><path d="M5.5 5V12M6 12.5H13" stroke="#5a94e4" stroke-dasharray="1 1" fill="none" opacity="0.8"/><path d="M1 4.5H13M.5 5V14M13.5 5V14M1 14.5H13" stroke="#5d99ea" fill="none"/><path d="M1 4.5H13M.5 5V14M13.5 5V14M1 14.5H13" stroke="#1752bd" stroke-dasharray="1 1" fill="none"/><path d="M0 4h1v1h-1zM13 4h1v1h-1zM0 14h1v1h-1zM13 14h1v1h-1z" fill="#5d99ea" opacity="0.5"/></svg>
<div style="position:absolute;left:446px;top:629px;width:160px;height:15px;background:#e6e6e6"></div>
<div style="position:absolute;left:446px;top:629px;width:116px;height:15px;background:#1096f2;border:1px solid #0a8cee"></div>
<svg style="position:absolute;left:670px;top:546px;overflow:visible" width="14" height="14" viewBox="0 0 14 14" ><path d="M2.5 0.5 H11.5 L13.5 3.6 V4.5 H0.5 V3.6 Z" fill="#fdfdfd" stroke="#8e8e8e" stroke-width="0.9"/><rect x="0" y="4" width="14" height="7" rx="0.8" fill="#2c79d2"/><rect x="1.2" y="5.4" width="11.6" height="1.6" fill="#e2eefb"/><rect x="1.2" y="7" width="11.6" height="2.6" fill="#b9d6f4"/><rect x="2.5" y="7.4" width="1" height="1.2" fill="#4a5a70"/><rect x="4.5" y="7.4" width="1" height="1.2" fill="#4a5a70"/><rect x="6.5" y="7.4" width="1" height="1.2" fill="#4a5a70"/><rect x="8.5" y="7.4" width="1" height="1.2" fill="#4a5a70"/><rect x="10.5" y="7.4" width="1" height="1.2" fill="#4a5a70"/><rect x="0" y="12" width="14" height="1.8" fill="#8c8c8c"/><rect x="5" y="11" width="4" height="3" rx="0.4" fill="#dea20e"/><rect x="6" y="12" width="2" height="1" fill="#f8d75a"/></svg>
<svg style="position:absolute;left:666px;top:575px;overflow:visible" width="16" height="15" viewBox="0 0 16 15" ><rect x="6" y="1" width="9" height="11" fill="url(#vb)"/><path d="M6 .5H15M15.5 1V12M6 12.5H15M5.5 1V12" stroke="#5d99ea" fill="none"/><path d="M6 .5H15M15.5 1V12M6 12.5H15M5.5 1V12" stroke="#1752bd" stroke-dasharray="1 1" fill="none"/><path d="M5 0h1v1h-1zM15 0h1v1h-1zM15 12h1v1h-1z" fill="#5d99ea" opacity="0.45"/><rect x="1" y="5" width="12" height="9" fill="#cde7fc"/><rect x="6" y="5" width="7" height="7" fill="#a6d3f8"/><path d="M5.5 5V12M6 12.5H13" stroke="#8fbdf0" fill="none"/><path d="M5.5 5V12M6 12.5H13" stroke="#5a94e4" stroke-dasharray="1 1" fill="none" opacity="0.8"/><path d="M1 4.5H13M.5 5V14M13.5 5V14M1 14.5H13" stroke="#5d99ea" fill="none"/><path d="M1 4.5H13M.5 5V14M13.5 5V14M1 14.5H13" stroke="#1752bd" stroke-dasharray="1 1" fill="none"/><path d="M0 4h1v1h-1zM13 4h1v1h-1zM0 14h1v1h-1zM13 14h1v1h-1z" fill="#5d99ea" opacity="0.5"/></svg>
<svg style="position:absolute;left:666px;top:601px;overflow:visible" width="16" height="15" viewBox="0 0 16 15" ><rect x="6" y="1" width="9" height="11" fill="url(#vb)"/><path d="M6 .5H15M15.5 1V12M6 12.5H15M5.5 1V12" stroke="#5d99ea" fill="none"/><path d="M6 .5H15M15.5 1V12M6 12.5H15M5.5 1V12" stroke="#1752bd" stroke-dasharray="1 1" fill="none"/><path d="M5 0h1v1h-1zM15 0h1v1h-1zM15 12h1v1h-1z" fill="#5d99ea" opacity="0.45"/><rect x="1" y="5" width="12" height="9" fill="#cde7fc"/><rect x="6" y="5" width="7" height="7" fill="#a6d3f8"/><path d="M5.5 5V12M6 12.5H13" stroke="#8fbdf0" fill="none"/><path d="M5.5 5V12M6 12.5H13" stroke="#5a94e4" stroke-dasharray="1 1" fill="none" opacity="0.8"/><path d="M1 4.5H13M.5 5V14M13.5 5V14M1 14.5H13" stroke="#5d99ea" fill="none"/><path d="M1 4.5H13M.5 5V14M13.5 5V14M1 14.5H13" stroke="#1752bd" stroke-dasharray="1 1" fill="none"/><path d="M0 4h1v1h-1zM13 4h1v1h-1zM0 14h1v1h-1zM13 14h1v1h-1z" fill="#5d99ea" opacity="0.5"/></svg>
<svg style="position:absolute;left:666px;top:627px;overflow:visible" width="16" height="15" viewBox="0 0 16 15" ><rect x="6" y="1" width="9" height="11" fill="url(#vb)"/><path d="M6 .5H15M15.5 1V12M6 12.5H15M5.5 1V12" stroke="#5d99ea" fill="none"/><path d="M6 .5H15M15.5 1V12M6 12.5H15M5.5 1V12" stroke="#1752bd" stroke-dasharray="1 1" fill="none"/><path d="M5 0h1v1h-1zM15 0h1v1h-1zM15 12h1v1h-1z" fill="#5d99ea" opacity="0.45"/><rect x="1" y="5" width="12" height="9" fill="#cde7fc"/><rect x="6" y="5" width="7" height="7" fill="#a6d3f8"/><path d="M5.5 5V12M6 12.5H13" stroke="#8fbdf0" fill="none"/><path d="M5.5 5V12M6 12.5H13" stroke="#5a94e4" stroke-dasharray="1 1" fill="none" opacity="0.8"/><path d="M1 4.5H13M.5 5V14M13.5 5V14M1 14.5H13" stroke="#5d99ea" fill="none"/><path d="M1 4.5H13M.5 5V14M13.5 5V14M1 14.5H13" stroke="#1752bd" stroke-dasharray="1 1" fill="none"/><path d="M0 4h1v1h-1zM13 4h1v1h-1zM0 14h1v1h-1zM13 14h1v1h-1z" fill="#5d99ea" opacity="0.5"/></svg>
<svg style="position:absolute;left:0;top:0" width="1021" height="699" viewBox="0 0 1021 699"><g fill="none" stroke="#3390f0" stroke-width="1.2" stroke-linejoin="round"><path d="M806.3 576.3 L810.1 584.3 L813.9 576.6 L817.8 584.3 L821.7 576.3 L823.3 576.3"/><path d="M826.6 576.3 L830.3 584.3 L834.0 579.3 L837.8 584.3 L841.7 578.6 L846.1 576.3 L850.1 584.3 L853.8 576.6 L857.8 584.3 L861.5 577.5 L865.9 576.2 L870.0 584.3 L874.0 578.6 L878.1 584.5 L882.1 579.0 L885.8 576.3 L889.8 584.3 L893.9 576.6 L897.9 584.3 L902.0 578.2 L906.0 576.4 L910.0 584.9 L914.1 585.1 L918.1 584.9 L922.5 576.3"/><path d="M927.7 576.3 L929.9 584.3 L933.9 576.6 L938.0 584.3 L941.6 577.1"/><path d="M806.2 608.9 L825.7 608.9 L830.1 607.5 L869.8 607.5 L873.9 610.0 L877.9 607.5 L925.6 607.5 L929.7 610.7"/><path d="M806.2 634.9 L817.6 634.9 L821.3 633.9 L825.7 635.2 L830.1 633.6 L869.8 633.6 L873.9 636.0 L877.9 633.6 L889.6 633.6 L894.0 635.1 L897.7 633.9 L901.8 635.2 L905.8 633.6 L925.6 633.6 L929.7 636.7"/></g></svg>
<span class="t" style="left:12px;top:10px;font-size:9.8px;font-weight:700;color:#222a3c;transform:translateX(0.75px) scaleX(1.0748);">Environment Overview</span>
<span class="t" style="left:809px;top:10px;font-size:9.8px;color:#263a6c;transform:translateX(0.53px) scaleX(0.9829);">Aug 31, 2016 - Now 7 days</span>
<span class="t" style="left:975px;top:10px;font-size:9.8px;color:#263a6c;transform:translateX(0.17px) scaleX(0.9068);">Reports</span>
<span class="t" style="left:23px;top:40px;color:#30333c;transform:translateX(0.04px) scaleX(1.0013);">Overview</span>
<span class="t" style="left:85px;top:40px;color:#30333c;transform:translateX(0.44px) scaleX(1.0166);">Health</span>
<span class="t" style="left:133px;top:39px;color:#30333c;transform:translateX(0.71px) scaleX(1.0454);">Investigate</span>
<span class="t" style="left:206px;top:40px;color:#30333c;transform:translateX(0.11px) scaleX(0.9947);">Getting Started &amp; Administration</span>
<span class="t" style="left:23px;top:65px;color:#30333c;transform:translateX(0.40px) scaleX(0.9356);">VMware</span>
<span class="t" style="left:77px;top:66px;color:#30333c;transform:translateX(0.62px) scaleX(0.9929);">Hyper-V</span>
<span class="t" style="left:17px;top:89px;font-weight:700;color:#222a3c;transform:translateX(0.66px) scaleX(1.0356);">Resource Efficiency</span>
<span class="t" style="left:302px;top:89px;font-weight:700;color:#222a3c;transform:translateX(0.57px) scaleX(1.0724);">Highest Impact Changes</span>
<span class="t" style="left:303px;top:335px;font-weight:700;color:#222a3c;transform:translateX(0.26px) scaleX(1.0556);">VMs with the Highest CPU Utilization</span>
<span class="t" style="left:659px;top:335px;font-weight:700;color:#222a3c;transform:translateX(0.26px) scaleX(1.0237);">VMs with the Most Memory Utilization</span>
<span class="t" style="left:303px;top:519px;font-weight:700;color:#222a3c;transform:translateX(0.13px) scaleX(1.0858);">VMs with the Most Storage Utilization</span>
<span class="t" style="left:659px;top:519px;font-weight:700;color:#222a3c;transform:translateX(0.13px) scaleX(1.0815);">VMs with the Highest Network Transfer Rate</span>
<span class="t" style="left:40px;top:115px;transform:translateX(0.17px) scaleX(0.9075);">CPU</span>
<span class="t" style="left:240px;top:115px;transform:translateX(0.60px) scaleX(0.9651);">29</span>
<span class="t" style="left:26px;top:145px;font-weight:700;color:#bdbdbd;transform:translateX(0.97px) scaleX(1.0687);">VMs with inaccurate</span>
<span class="t" style="left:26px;top:159px;font-weight:700;color:#bdbdbd;transform:translateX(0.74px) scaleX(1.0345);">CPU allocation</span>
<span class="t" style="left:240px;top:146.5px;font-size:12px;color:#1c86c8;transform:translateX(0.22px) scaleX(0.9823);">Optimize</span>
<span class="t" style="left:40px;top:199px;transform:translateX(0.11px) scaleX(0.9617);">Memory</span>
<span class="t" style="left:239px;top:199px;transform:translateX(0.87px) scaleX(1.0178);">15</span>
<span class="t" style="left:26px;top:229px;font-weight:700;color:#bdbdbd;transform:translateX(0.97px) scaleX(1.0687);">VMs with inaccurate</span>
<span class="t" style="left:26px;top:243px;font-weight:700;color:#bdbdbd;transform:translateX(0.29px) scaleX(1.1007);">memory allocation</span>
<span class="t" style="left:240px;top:230.5px;font-size:12px;color:#1c86c8;transform:translateX(0.22px) scaleX(0.9823);">Optimize</span>
<span class="t" style="left:40px;top:283px;transform:translateX(0.12px) scaleX(1.0021);">Storage</span>
<span class="t" style="left:240px;top:283px;transform:translateX(0.33px) scaleX(0.9725);">33</span>
<span class="t" style="left:26px;top:313px;font-weight:700;color:#bdbdbd;transform:translateX(0.97px) scaleX(1.0687);">VMs with inaccurate</span>
<span class="t" style="left:26px;top:327px;font-weight:700;color:#bdbdbd;transform:translateX(0.48px) scaleX(1.0920);">storage allocation</span>
<span class="t" style="left:240px;top:314.5px;font-size:12px;color:#1c86c8;transform:translateX(0.22px) scaleX(0.9823);">Optimize</span>
<span class="t" style="left:307px;top:116px;color:#808080;transform:translateX(0.85px) scaleX(0.9675);">Search</span>
<span class="t" style="left:329px;top:139px;transform:translateX(0.40px) scaleX(0.9613);">Object Name</span>
<span class="t" style="left:492px;top:139px;transform:translateX(0.30px) scaleX(0.9841);">Change Event</span>
<span class="t" style="left:649px;top:139px;transform:translateX(0.46px) scaleX(0.9851);">Performance Impact</span>
<span class="t" style="left:784px;top:139px;transform:translateX(0.51px) scaleX(1.0186);">Affected Objects</span>
<span class="t" style="left:901px;top:139px;transform:translateX(0.09px) scaleX(0.9764);">Change Date</span>
<span class="t" style="left:326px;top:157px;transform:translateX(0.44px) scaleX(0.9862);">VM_Test2</span>
<span class="t" style="left:420px;top:157px;transform:translateX(0.71px) scaleX(0.9638);">VM 'VM_Test2' was powered on</span>
<span class="t" style="left:690px;top:157px;transform:translateX(0.60px) scaleX(1.0514);">-21.6</span>
<span class="t" style="left:823px;top:157px;">1</span>
<span class="t" style="left:892px;top:157px;transform:translateX(0.31px) scaleX(1.0330);">9/6/16 11:18 AM</span>
<span class="t" style="left:326px;top:178px;transform:translateX(0.44px) scaleX(0.9862);">VM_Test2</span>
<span class="t" style="left:420px;top:178px;transform:translateX(0.72px) scaleX(0.9735);">VM 'VM_Test2' was powered off</span>
<span class="t" style="left:690px;top:178px;transform:translateX(0.60px) scaleX(1.0514);">-21.6</span>
<span class="t" style="left:823px;top:178px;">1</span>
<span class="t" style="left:892px;top:178px;transform:translateX(0.31px) scaleX(1.0330);">9/6/16 11:15 AM</span>
<span class="t" style="left:325px;top:199px;transform:translateX(0.97px) scaleX(0.9302);">MC_VM07191</span>
<span class="t" style="left:420px;top:199px;transform:translateX(0.60px) scaleX(0.9498);">VM 'MC_VM07191' was powered on</span>
<span class="t" style="left:690px;top:199px;transform:translateX(0.59px) scaleX(1.0617);">-20.2</span>
<span class="t" style="left:822px;top:199px;">2</span>
<span class="t" style="left:892px;top:199px;transform:translateX(0.31px) scaleX(1.0330);">9/6/16 11:18 AM</span>
<span class="t" style="left:325px;top:220px;transform:translateX(0.97px) scaleX(0.9302);">MC_VM07191</span>
<span class="t" style="left:420px;top:220px;transform:translateX(0.71px) scaleX(0.9584);">VM 'MC_VM07191' was powered off</span>
<span class="t" style="left:690px;top:220px;transform:translateX(0.59px) scaleX(1.0617);">-20.2</span>
<span class="t" style="left:822px;top:220px;">2</span>
<span class="t" style="left:892px;top:220px;transform:translateX(0.31px) scaleX(1.0330);">9/6/16 11:15 AM</span>
<span class="t" style="left:326px;top:241px;transform:translateX(0.18px) scaleX(0.9319);">XD78SM002</span>
<span class="t" style="left:420px;top:241px;transform:translateX(0.60px) scaleX(0.9472);">VM 'XD78SM002' was powered on</span>
<span class="t" style="left:690px;top:241px;transform:translateX(0.60px) scaleX(1.0374);">-16.4</span>
<span class="t" style="left:822px;top:241px;">3</span>
<span class="t" style="left:892px;top:241px;transform:translateX(0.21px) scaleX(1.0240);">8/31/16 7:01 AM</span>
<span class="t" style="left:326px;top:262px;transform:translateX(0.18px) scaleX(0.9327);">XD78SM001</span>
<span class="t" style="left:420px;top:262px;transform:translateX(0.60px) scaleX(0.9472);">VM 'XD78SM001' was powered on</span>
<span class="t" style="left:690px;top:262px;transform:translateX(0.60px) scaleX(1.0374);">-16.4</span>
<span class="t" style="left:822px;top:262px;">3</span>
<span class="t" style="left:892px;top:262px;transform:translateX(0.21px) scaleX(1.0240);">8/31/16 7:01 AM</span>
<span class="t" style="left:326px;top:283px;transform:translateX(0.17px) scaleX(0.9287);">XD78SM003</span>
<span class="t" style="left:420px;top:283px;transform:translateX(0.60px) scaleX(0.9472);">VM 'XD78SM003' was powered on</span>
<span class="t" style="left:690px;top:283px;transform:translateX(0.60px) scaleX(1.0374);">-16.4</span>
<span class="t" style="left:822px;top:283px;">3</span>
<span class="t" style="left:892px;top:283px;transform:translateX(0.21px) scaleX(1.0240);">8/31/16 7:01 AM</span>
<span class="t" style="left:337px;top:361px;font-weight:700;color:#222a3c;transform:translateX(0.85px) scaleX(0.9576);">CPU</span>
<span class="t" style="left:467px;top:361px;font-weight:700;color:#bdbdbd;transform:translateX(0.45px) scaleX(1.1319);">% Used</span>
<span class="t" style="left:335px;top:390px;transform:translateX(0.37px) scaleX(0.9611);">CentOS_56_EN_x8...</span>
<span class="t" style="left:616px;top:391px;transform:translateX(0.34px) scaleX(1.0497);">76 %</span>
<span class="t" style="left:335px;top:417px;transform:translateX(0.37px) scaleX(0.9611);">CentOS_56_EN_x8...</span>
<span class="t" style="left:616px;top:418px;transform:translateX(0.34px) scaleX(1.0497);">76 %</span>
<span class="t" style="left:335px;top:444px;transform:translateX(0.37px) scaleX(0.9611);">CentOS_56_EN_x8...</span>
<span class="t" style="left:616px;top:445px;transform:translateX(0.34px) scaleX(1.0497);">76 %</span>
<span class="t" style="left:693px;top:361px;font-weight:700;color:#222a3c;transform:translateX(0.49px) scaleX(1.1199);">Memory</span>
<span class="t" style="left:823px;top:361px;font-weight:700;color:#bdbdbd;transform:translateX(0.44px) scaleX(1.1319);">% Used</span>
<span class="t" style="left:691px;top:390px;transform:translateX(0.35px) scaleX(0.9322);">XDR002</span>
<span class="t" style="left:972px;top:391px;transform:translateX(0.56px) scaleX(1.0433);">54 %</span>
<span class="t" style="left:691px;top:417px;transform:translateX(0.21px) scaleX(0.9656);">Fog_Win8.1_ENT_...</span>
<span class="t" style="left:972px;top:418px;transform:translateX(0.98px) scaleX(1.0190);">41 %</span>
<span class="t" style="left:691px;top:444px;transform:translateX(0.36px) scaleX(0.9611);">CentOS_56_EN_x8...</span>
<span class="t" style="left:972px;top:445px;transform:translateX(0.41px) scaleX(1.0464);">37 %</span>
<span class="t" style="left:337px;top:545px;font-weight:700;color:#222a3c;transform:translateX(0.80px) scaleX(1.1057);">Storage</span>
<span class="t" style="left:467px;top:545px;font-weight:700;color:#bdbdbd;transform:translateX(0.45px) scaleX(1.1319);">% Used</span>
<span class="t" style="left:335px;top:574px;transform:translateX(0.79px) scaleX(0.9217);">TPL_Win7_ENT_SP...</span>
<span class="t" style="left:616px;top:575px;transform:translateX(0.67px) scaleX(1.0335);">85 %</span>
<span class="t" style="left:335px;top:601px;transform:translateX(0.21px) scaleX(0.9670);">Fog_Lewi_03_Win...</span>
<span class="t" style="left:616px;top:602px;transform:translateX(0.67px) scaleX(1.0335);">80 %</span>
<span class="t" style="left:335px;top:628px;transform:translateX(0.21px) scaleX(0.9670);">Fog_Lewi_04_Win...</span>
<span class="t" style="left:616px;top:629px;transform:translateX(0.34px) scaleX(1.0497);">73 %</span>
<span class="t" style="left:693px;top:545px;font-weight:700;color:#222a3c;transform:translateX(0.56px) scaleX(1.0857);">Network</span>
<span class="t" style="left:823px;top:545px;font-weight:700;color:#bdbdbd;transform:translateX(0.60px) scaleX(1.1554);">b/s Rate</span>
<span class="t" style="left:691px;top:574px;transform:translateX(0.21px) scaleX(0.9708);">Fog_Win2012_R2_...</span>
<span class="t" style="left:944px;top:574px;transform:translateX(0.50px) scaleX(0.9946);">4.2 Mb/s</span>
<span class="t" style="left:691px;top:600px;transform:translateX(0.36px) scaleX(0.9611);">CentOS_56_EN_x8...</span>
<span class="t" style="left:944px;top:600px;transform:translateX(0.25px) scaleX(0.9721);">646 Kb/s</span>
<span class="t" style="left:691px;top:626px;transform:translateX(0.36px) scaleX(0.9611);">CentOS_56_EN_x8...</span>
<span class="t" style="left:944px;top:626px;transform:translateX(0.25px) scaleX(0.9721);">644 Kb/s</span>
</body></html>
